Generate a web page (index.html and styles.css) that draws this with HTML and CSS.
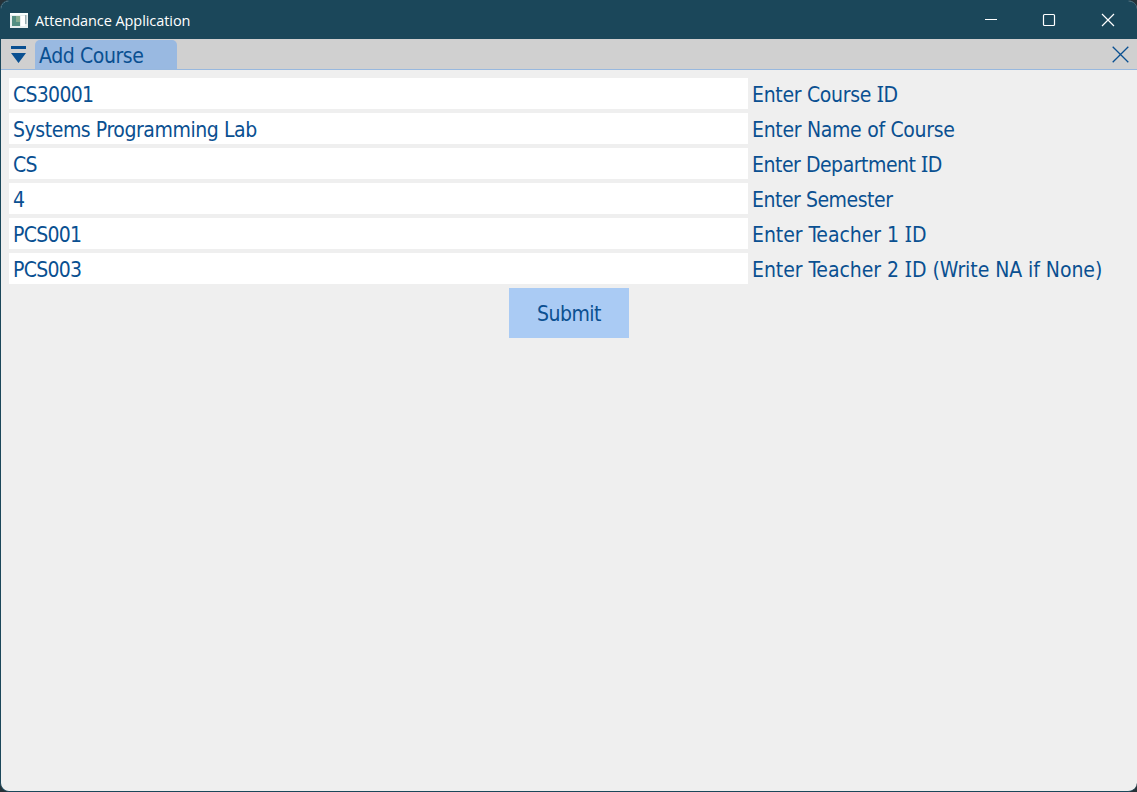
FILE: index.html
```html
<!DOCTYPE html>
<html lang="en">
<head>
<meta charset="utf-8">
<title>Attendance Application</title>
<link rel="stylesheet" href="styles.css">
</head>
<body>
<div class="window">
  <header class="titlebar">
    <svg class="app-icon" width="18" height="15" viewBox="0 0 18 15"><path fill="#e8efef" d="M0 0h18v15H0z"/><path fill="#f9ffff" d="M0 0h18v2H0z"/><path fill="#548f83" d="M2 3h8v10H2z"/><path fill="#87ad91" d="M6 3h4v6H6z"/><path fill="#fff" d="M11 3h4v10h-4z"/><path fill="#9aaeb2" d="M15 2h1.500v9H15z"/></svg>
    <span class="title">Attendance Application</span>
    <div class="controls">
      <svg width="58" height="38" viewBox="0 0 58 38"><path d="M20 18.500h12"/></svg>
      <svg width="58" height="38" viewBox="0 0 58 38"><rect x="20.500" y="13.500" width="11" height="11" rx="1"/></svg>
      <svg width="58" height="38" viewBox="0 0 58 38"><path d="M21 13l12 12M33 13l-12 12"/></svg>
    </div>
  </header>
  <nav class="tabbar">
    <svg class="menu" width="15" height="18" viewBox="0 0 15 18"><path d="M0 1h15v3H0zM0 8h15l-7.500 10z"/></svg>
    <span class="tab">Add Course</span>
    <svg class="close" width="17" height="17" viewBox="0 0 17 17"><path d="M.7.700l15.600 15.600M16.300.700L.700 16.300"/></svg>
  </nav>
  <main class="form">
    <div class="row"><span class="field code">CS30001</span><span class="label">Enter Course <i>I</i>D</span></div>
    <div class="row"><span class="field">Systems Programming Lab</span><span class="label">Enter Name of Course</span></div>
    <div class="row"><span class="field code">CS</span><span class="label tight">Enter Department <i>I</i>D</span></div>
    <div class="row"><span class="field">4</span><span class="label tight">Enter Semester</span></div>
    <div class="row"><span class="field code">PCS001</span><span class="label loose">Enter Teacher 1 <i>I</i>D</span></div>
    <div class="row"><span class="field code">PCS003</span><span class="label loose">Enter Teacher 2 <i>I</i>D (Write NA if None)</span></div>
    <button class="submit">Submit</button>
  </main>
</div>
</body>
</html>
```
FILE: styles.css
```css
* { box-sizing: border-box; }
body {
  margin: 0;
  background: #263238;
  color: #0a5091;
  font: 21px/30px "DejaVu Sans Condensed", "DejaVu Sans", sans-serif;
  font-stretch: condensed;
}
.window {
  height: 792px;
  display: flex;
  flex-direction: column;
  overflow: hidden;
  background: #efefef;
  border: solid #1b475a;
  border-width: 1px 0 1px 1px;
  border-radius: 9px;
}
.titlebar {
  height: 38px;
  flex: none;
  display: flex;
  align-items: center;
  padding-left: 9px;
  background: #1b475a;
  color: #fff;
}
.title {
  margin: 2px 0 0 7px;
  font: 14.500px/20px "Open Sans", "Noto Sans", sans-serif;
  letter-spacing: -0.070px;
}
.controls { display: flex; margin: 0 -2px 0 auto; }
.controls svg { fill: none; stroke: #fff; stroke-width: 1.200; }
.tabbar {
  height: 31px;
  flex: none;
  display: flex;
  align-items: center;
  padding: 0 8px 0 10px;
  background: #d0d0d0;
  border-bottom: 1px solid #98b8de;
}
.menu { fill: #0a5091; }
.tab {
  width: 142px;
  height: 29px;
  margin: 1px 0 0 9px;
  padding-left: 4px;
  line-height: 32px;
  letter-spacing: -0.400px;
  background: #99b9e1;
  border-radius: 5px 5px 0 0;
}
.close { margin-left: auto; fill: none; stroke: #0a5091; stroke-width: 1.300; }
.form {
  display: flex;
  flex-direction: column;
  gap: 4px;
  padding: 8px;
}
.row { display: flex; height: 31px; line-height: 34px; white-space: nowrap; }
.field { width: 739px; padding-left: 4px; background: #fff; letter-spacing: -0.430px; }
.code { letter-spacing: -0.700px; }
.label { margin-left: 4px; letter-spacing: -0.300px; }
.tight { letter-spacing: -0.470px; }
.loose { letter-spacing: -0.050px; }
.label i { font-family: "Noto Sans", sans-serif; font-style: normal; line-height: 1; }
.submit {
  align-self: center;
  width: 120px;
  height: 50px;
  padding: 2px 0 0;
  border: 0;
  background: #aacbf4;
  color: inherit;
  font: inherit;
  letter-spacing: -0.500px;
}
```
